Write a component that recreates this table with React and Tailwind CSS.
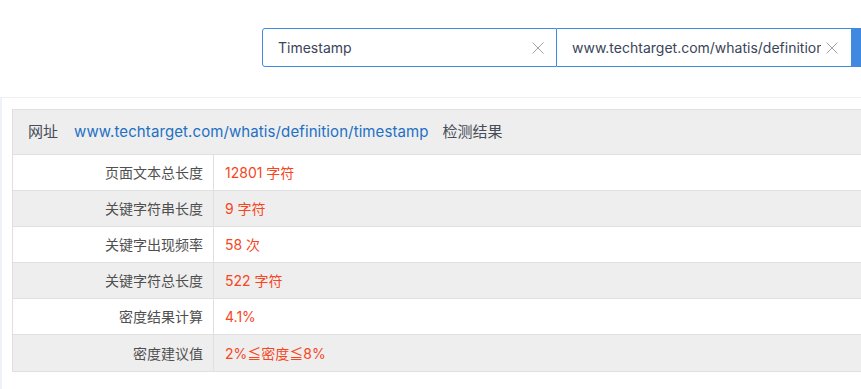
import React from 'react';

const X = () => (
  <svg width="12" height="12" viewBox="0 0 12 12" className="shrink-0">
    <path d="M0.5 0.5L11.5 11.5M11.5 0.5L0.5 11.5" stroke="#a0a4aa" strokeWidth="1" />
  </svg>
);

const rows = [
  ['页面文本总长度', '12801 字符'],
  ['关键字符串长度', '9 字符'],
  ['关键字出现频率', '58 次'],
  ['关键字符总长度', '522 字符'],
  ['密度结果计算', '4.1%'],
  ['密度建议值', '2%≦密度≦8%'],
];

const App = () => {
  return (
    <div
      className="w-[861px] h-[389px] overflow-hidden bg-white"
      style={{ fontFamily: 'Inter, "Noto Sans CJK SC", sans-serif' }}
    >
      <div className="h-[97px] pl-[262px] pt-[28px]">
        <div className="flex w-[700px] h-[39px]">
          <div className="w-[295px] flex items-center justify-between border border-[#3f8ae2] rounded-l-[3px] pl-[15px] pr-[12px]">
            <span className="text-[14px] text-[#3a4559]">Timestamp</span>
            <X />
          </div>
          <div className="w-[295px] flex items-center justify-between border border-l-0 border-[#3f8ae2] pl-[15px] pr-[13px] overflow-hidden">
            <span className="text-[14px] text-[#3a4559] whitespace-nowrap overflow-hidden w-[249px]">www.techtarget.com/whatis/definition/timestamp</span>
            <X />
          </div>
          <div className="w-[80px] bg-[#4088e0]" />
        </div>
      </div>

      <div className="border-t border-[#eceef1] border-l-2 border-l-[#eef1f5] h-[292px] pt-[11px] pl-[10px]">
        <div className="w-[900px] border border-[#e0e0e0]">
          <div className="h-[45px] bg-[#eeeeee] border-b border-[#e0e0e0] flex items-center pl-[15px] text-[15px]">
            <span className="text-[#474c57]">网址</span>
            <span className="text-[#2370c4] ml-[16px] tracking-[0.1px]">www.techtarget.com/whatis/definition/timestamp</span>
            <span className="text-[#474c57] ml-[14px]">检测结果</span>
          </div>
          {rows.map(([label, value], i) => (
            <div
              key={label}
              className={`flex h-[36px] ${i < rows.length - 1 ? 'border-b border-[#e0e0e0]' : ''} ${i % 2 === 1 ? 'bg-[#eeeeee]' : 'bg-white'}`}
            >
              <div className="w-[201px] border-r border-[#e0e0e0] flex items-center justify-end pr-[10px] text-[14px] text-[#4f4f4f]">
                {label}
              </div>
              <div className="flex items-center pl-[11px] text-[14px] text-[#f5461e]">{value}</div>
            </div>
          ))}
        </div>
      </div>
    </div>
  );
};

export default App;
